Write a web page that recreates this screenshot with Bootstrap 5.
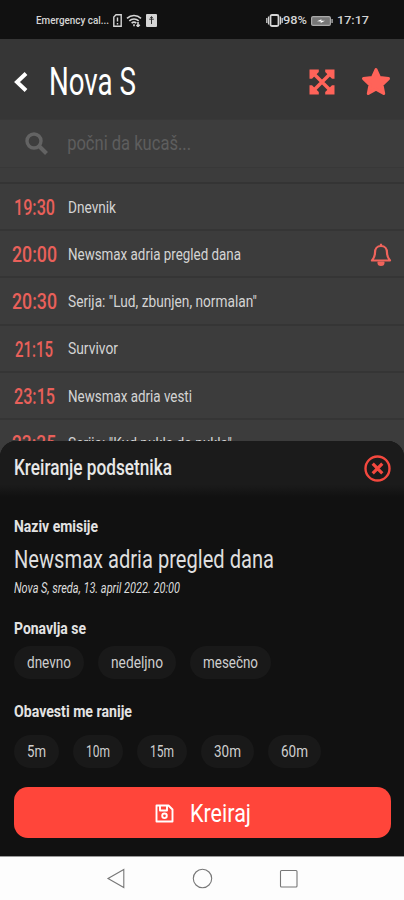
<!DOCTYPE html>
<html lang="sr-Latn">
<head>
<meta charset="utf-8">
<meta name="viewport" content="width=device-width, initial-scale=1">
<title>Nova S</title>
<link href="https://cdn.jsdelivr.net/npm/bootstrap@5.3.0/dist/css/bootstrap.min.css" rel="stylesheet">
<style>
html,body{height:100%;overflow:hidden}
body{font-family:Roboto,"Liberation Sans",sans-serif;background:#111;color:#dedede}
.phone{width:404px;height:900px;overflow:hidden;background:#3c3c3c}
svg{display:block;flex:none}
/* condensed lettering: the script narrows each text to its data-w width */
.fit{display:inline-block;white-space:nowrap;transform-origin:0 50%;flex:none}
.statusbar{height:39px;background:#111;font-size:11.5px;color:#d5d5d5;padding:2px 35px 0 36px}
.statusbar .fit{font-weight:500}
.topbar{height:80px;background:#363636;padding:5px 12px 0 14px}
.topbar h1{font-size:38px;line-height:44px;font-weight:400;color:#fff;margin-left:21px}
.star{margin-left:25px}
.searchbar{height:49px;padding:0 25px;font-size:21px;color:#5e5e5e;border-bottom:1px solid #383838;border-top:1px solid #383838;background:#3d3d3d}
.spacer{height:16px;border-bottom:2px solid #343434}
.slot{height:47.2px;border-bottom:2px solid #353535;padding:2px 12px 0 0;font-size:17px;color:#d4d4d4}
.hour{width:68px;font-size:22px;font-weight:500;color:#e9605a}
.sheet{top:441px;height:415px;background:#111;border-radius:16px 16px 0 0;overflow:hidden}
.sheet-head{height:56px;padding:0 13px 1px 14px;background:linear-gradient(#1b1b1b 78%,#111);font-size:21.5px;font-weight:500;color:#e8e8e8}
.sheet-body{padding:19px 13px 0 14px}
.lbl{height:20px;line-height:20px;font-size:17px;font-weight:700;color:#e3e3e3}
.lbl-repeat{margin-top:21px}
.lbl-early{margin-top:22px}
.show{height:30px;line-height:30px;font-size:26.5px;margin-top:8px}
.meta{height:18px;line-height:19px;font-size:14.5px;font-style:italic;margin-top:5px}
.chips-repeat{gap:14px;margin-top:8px}
.chips-early{gap:14px;margin-top:14px}
.chip{height:33px;border-radius:17px;background:#191919;font-size:17px;color:#cecece;padding:0 13px}
.save{height:51px;border-radius:14px;background:#ff453a;color:#fff;font-size:26.5px;margin-top:19px;gap:16px;padding:1px 0 0 1px}
.save:hover{background:#ff453a;color:#fff}
.sysnav{top:856px;height:44px;background:#fdfdfd;border-top:1px solid #999}
</style>
</head>
<body>
<div class="phone position-relative">
  <div class="statusbar d-flex align-items-center">
    <span class="fit" data-w="73">Emergency cal...</span>
    <svg class="ms-1" width="9" height="13" viewBox="0 0 9 13" fill="none" stroke="#d5d5d5" stroke-width="1.4"><path d="M3 .8H8.2V12.2H.8V3zM4.5 3.6V7.6M4.5 9v1.4"/></svg>
    <svg class="ms-1" width="16" height="13" viewBox="0 0 16 13" fill="none" stroke="#d5d5d5" stroke-width="1.6"><path d="M1 4.3C5 .6 11 .6 15 4.3M3.3 6.8C6 4.4 10 4.4 12.7 6.8M5.6 9.2C7 8 9 8 10.3 9.2"/><path d="M8 10.2v2M12 8v4.5M10.5 11l1.5 1.5 1.8-1.8"/></svg>
    <svg class="ms-1" width="11" height="13" viewBox="0 0 11 13"><rect width="11" height="13" rx="1" fill="#d5d5d5"/><path d="M5.5 3v7M3.2 5.2h4.6M4.3 4l1.2-1.5L6.7 4" stroke="#333" fill="none"/></svg>
    <svg class="ms-auto" width="17" height="13" viewBox="0 0 17 13" fill="none" stroke="#d5d5d5" stroke-width="1.8"><rect x="4.5" y="1" width="8" height="11" rx="1.5"/><path d="M2.5 2.5v8M14.5 2.5v8M.8 4v5M16.2 4v5" stroke-width="1.2"/></svg>
    <span class="fit" data-w="24">98%</span>
    <svg class="mx-1" width="22" height="10" viewBox="0 0 22 10"><rect x=".6" y=".6" width="18.8" height="8.8" rx="1.5" fill="#777" stroke="#aaa" stroke-width="1.2"/><path d="M20.4 3h1.4v4h-1.4z" fill="#aaa"/><path d="M6 5.2l4.5-2-.3 1.5H14L9.600 7l.3-1.500z" fill="#fff"/></svg>
    <span class="fit" data-w="32">17:17</span>
  </div>

  <header class="topbar d-flex align-items-center">
    <svg width="14" height="20" viewBox="0 0 14 20" fill="none" stroke="#fff" stroke-width="4"><path d="M12 1.500 3 10l9 8.500"/></svg>
    <h1 class="mb-0 d-flex"><span class="fit" data-w="87">Nova S</span></h1>
    <svg class="ms-auto" width="26" height="26" viewBox="0 0 26 26" fill="#ff6359"><path d="M4 4l18 18M22 4 4 22" stroke="#ff6359" stroke-width="3.400"/><path d="M.5.5H9.800V3L3 9.800H.5zM25.500.5V9.800H23L16.200 3V.5zM.5 25.500V16.200H3L9.800 23V25.500zM25.500 25.500H16.200V23L23 16.200H25.500z"/></svg>
    <svg class="star" width="32" height="32" viewBox="0 0 32 32" fill="#ff6359" stroke="#ff6359" stroke-width="3" stroke-linejoin="round"><path d="M16 3.500 19.600 11.500 28.500 12.600 22 18.800 23.700 27.500 16 23.300 8.300 27.500 10 18.800 3.500 12.600 12.400 11.500z"/></svg>
  </header>

  <div class="searchbar d-flex align-items-center">
    <svg width="23" height="23" viewBox="0 0 23 23" fill="none" stroke="#636363"><circle cx="9" cy="9" r="7" stroke-width="3.400"/><path d="M14 14l7.500 7.500" stroke-width="4"/></svg>
    <span class="fit ms-3 ps-1" data-w="127">počni da kucaš...</span>
  </div>
  <div class="spacer"></div>

  <div class="slot d-flex align-items-center"><div class="hour d-flex justify-content-center"><span class="fit" data-w="41">19:30</span></div><span class="fit" data-w="48">Dnevnik</span></div>
  <div class="slot d-flex align-items-center"><div class="hour d-flex justify-content-center"><span class="fit" data-w="45">20:00</span></div><span class="fit" data-w="173">Newsmax adria pregled dana</span>
    <svg class="ms-auto" width="22" height="24" viewBox="0 0 22 24" fill="none" stroke="#f0645c" stroke-width="2.200" stroke-linejoin="round"><path d="M11 3C7 3 5 6 5 9.500 5 14 3.500 15.500 2 17.500H20C18.500 15.500 17 14 17 9.500 17 6 15 3 11 3zM11 .8V3"/><path d="M8.500 19.500a2.500 2.500 0 0 0 5 0z" fill="#f0645c"/></svg></div>
  <div class="slot d-flex align-items-center"><div class="hour d-flex justify-content-center"><span class="fit" data-w="45">20:30</span></div><span class="fit" data-w="189">Serija: "Lud, zbunjen, normalan"</span></div>
  <div class="slot d-flex align-items-center"><div class="hour d-flex justify-content-center"><span class="fit" data-w="38">21:15</span></div><span class="fit" data-w="50">Survivor</span></div>
  <div class="slot d-flex align-items-center"><div class="hour d-flex justify-content-center"><span class="fit" data-w="41">23:15</span></div><span class="fit" data-w="124">Newsmax adria vesti</span></div>
  <div class="slot d-flex align-items-center"><div class="hour d-flex justify-content-center"><span class="fit" data-w="44">23:35</span></div><span class="fit" data-w="164">Serija: "Kud pukla da pukla"</span></div>

  <section class="sheet position-absolute start-0 w-100">
    <div class="sheet-head d-flex align-items-center justify-content-between">
      <span class="fit" data-w="158">Kreiranje podsetnika</span>
      <svg width="27" height="27" viewBox="0 0 27 27" fill="none" stroke="#f4483e"><circle cx="13.500" cy="13.500" r="12" stroke-width="2.400"/><path d="M8.700 8.700l9.600 9.600M18.300 8.700l-9.600 9.600" stroke-width="3.200"/></svg>
    </div>
    <div class="sheet-body">
      <div class="lbl"><span class="fit" data-w="84">Naziv emisije</span></div>
      <div class="show"><span class="fit" data-w="260">Newsmax adria pregled dana</span></div>
      <div class="meta"><span class="fit" data-w="166">Nova S, sreda, 13. april 2022. 20:00</span></div>
      <div class="lbl lbl-repeat"><span class="fit" data-w="72">Ponavlja se</span></div>
      <div class="chips-repeat d-flex">
        <div class="chip d-flex align-items-center"><span class="fit" data-w="44">dnevno</span></div>
        <div class="chip d-flex align-items-center"><span class="fit" data-w="52">nedeljno</span></div>
        <div class="chip d-flex align-items-center"><span class="fit" data-w="55">mesečno</span></div>
      </div>
      <div class="lbl lbl-early"><span class="fit" data-w="118">Obavesti me ranije</span></div>
      <div class="chips-early d-flex">
        <div class="chip d-flex align-items-center"><span class="fit" data-w="19">5m</span></div>
        <div class="chip d-flex align-items-center"><span class="fit" data-w="24">10m</span></div>
        <div class="chip d-flex align-items-center"><span class="fit" data-w="24">15m</span></div>
        <div class="chip d-flex align-items-center"><span class="fit" data-w="27">30m</span></div>
        <div class="chip d-flex align-items-center"><span class="fit" data-w="27">60m</span></div>
      </div>
      <button class="save btn border-0 w-100 d-flex align-items-center justify-content-center" type="button">
        <svg width="19" height="19" viewBox="0 0 19 19" fill="none" stroke="#fff" stroke-width="1.900" stroke-linejoin="round"><path d="M1.500 1.500H13.500L17.500 5.500V17.500H1.500z"/><path d="M5 1.500V6.500H12V1.500"/><circle cx="9.500" cy="11.800" r="2.300"/></svg>
        <span class="fit" data-w="61">Kreiraj</span>
      </button>
    </div>
  </section>

  <nav class="sysnav position-absolute start-0 w-100 d-flex justify-content-center align-items-center" aria-label="System">
    <svg width="404" height="43" viewBox="0 857 404 43" fill="none" stroke="#777" stroke-width="1.100"><path d="M108 878.500 123.800 869.500V887.500z"/><circle cx="202.500" cy="878.500" r="9.200"/><rect x="280.500" y="870.500" width="16.500" height="16.500" rx="1"/></svg>
  </nav>
</div>
<script src="https://cdn.jsdelivr.net/npm/bootstrap@5.3.0/dist/js/bootstrap.bundle.min.js"></script>
<script>
document.querySelectorAll('.fit').forEach(function (el) {
  var natural = el.getBoundingClientRect().width, target = +el.dataset.w;
  el.style.transform = 'scaleX(' + target / natural + ')';
  el.style.marginRight = (target - natural) + 'px';
});
</script>
</body>
</html>
